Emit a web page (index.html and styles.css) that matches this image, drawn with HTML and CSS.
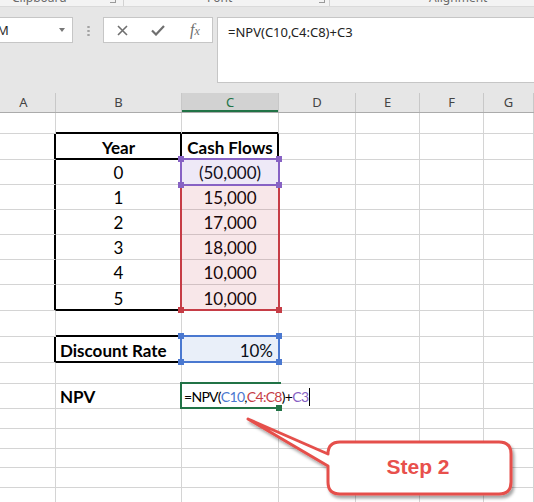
FILE: index.html
```html
<!DOCTYPE html>
<html lang="en">
<head>
    <meta charset="UTF-8">
    <title>NPV - Step 2</title>
    <link rel="stylesheet" href="styles.css">
</head>
<body>
    <!-- bottom edge of the ribbon, labels cut off -->
    <div class="ribbon-tail">
        <span class="lbl clip">Clipboard</span>
        <span class="launch"></span>
        <span class="vsep s1"></span>
        <span class="lbl font">Font</span>
        <span class="launch"></span>
        <span class="vsep s2"></span>
        <span class="lbl align">Alignment</span>
    </div>

    <!-- formula bar -->
    <div class="fbar">
        <div class="namebox">
            <span class="nm">M</span>
            <span class="drop"></span>
        </div>
        <div class="grip"></div>
        <div class="fbtns">
            <span class="btn">
                <svg width="11" height="11" viewBox="0 0 11 11"><path d="M1 1 L10 10 M10 1 L1 10" stroke="#6f6f6f" stroke-width="1.6" fill="none"/></svg>
            </span>
            <span class="btn">
                <svg width="14" height="11" viewBox="0 0 14 11"><path d="M1 5.5 L5 9.5 L13 1" stroke="#6f6f6f" stroke-width="2.2" fill="none"/></svg>
            </span>
            <span class="btn fx">f<small>x</small></span>
        </div>
        <div class="finput">=NPV(C10,C4:C8)+C3</div>
    </div>

    <!-- column headers -->
    <div class="cols">
        <div class="ca">A</div>
        <div>B</div>
        <div class="cur">C</div>
        <div>D</div>
        <div>E</div>
        <div>F</div>
        <div>G</div>
    </div>

    <div class="sheet">
        <div class="row h21"><div></div><div class="kb"></div><div class="kb"></div><div></div><div></div><div></div><div></div></div>
        <div class="row h26"><div class="kr"></div><div class="kr kb b">Year</div><div class="kr kb b">Cash Flows</div><div></div><div></div><div></div><div></div></div>
        <div class="row h25"><div class="kr"></div><div>0</div><div>(50,000)</div><div></div><div></div><div></div><div></div></div>
        <div class="row h25"><div class="kr"></div><div>1</div><div>15,000</div><div></div><div></div><div></div><div></div></div>
        <div class="row h25"><div class="kr"></div><div>2</div><div>17,000</div><div></div><div></div><div></div><div></div></div>
        <div class="row h25"><div class="kr"></div><div>3</div><div>18,000</div><div></div><div></div><div></div><div></div></div>
        <div class="row h25"><div class="kr"></div><div>4</div><div>10,000</div><div></div><div></div><div></div><div></div></div>
        <div class="row h26"><div class="kr"></div><div class="kb">5</div><div>10,000</div><div></div><div></div><div></div><div></div></div>
        <div class="row h26"><div></div><div class="kb"></div><div></div><div></div><div></div><div></div><div></div></div>
        <div class="row h26"><div class="kr"></div><div class="kr kb b left">Discount Rate</div><div class="right">10%</div><div></div><div></div><div></div><div></div></div>
        <div class="row h21"><div></div><div></div><div></div><div></div><div></div><div></div><div></div></div>
        <div class="row h25"><div></div><div class="b left">NPV</div><div></div><div></div><div></div><div></div><div></div></div>
        <div class="row h20"><div></div><div></div><div></div><div></div><div></div><div></div><div></div></div>
        <div class="row h20"><div></div><div></div><div></div><div></div><div></div><div></div><div></div></div>
        <div class="row h19"><div></div><div></div><div></div><div></div><div></div><div></div><div></div></div>
        <div class="row h20"><div></div><div></div><div></div><div></div><div></div><div></div><div></div></div>
        <div class="row h20"><div></div><div></div><div></div><div></div><div></div><div></div><div></div></div>

        <!-- reference highlights while editing -->
        <div class="rng red r-flows"><i class="bl"></i><i class="br"></i></div>
        <div class="rng purple r-first"><i class="tl"></i><i class="tr"></i><i class="bl"></i><i class="br"></i></div>
        <div class="rng blue r-rate"><i class="tl"></i><i class="tr"></i><i class="bl"></i><i class="br"></i></div>

        <!-- in-cell editor -->
        <div class="editor">=NPV(<span class="t-blue">C10</span>,<span class="t-red">C4:C8</span>)+<span class="t-purple">C3</span><span class="caret"></span></div>
        <div class="active"><i></i></div>

        <svg class="callout" width="534" height="395" viewBox="0 0 534 395">
            <defs>
                <filter id="sh" x="-10%" y="-10%" width="130%" height="140%">
                    <feDropShadow dx="2" dy="3" stdDeviation="1.5" flood-color="#000" flood-opacity="0.35"/>
                </filter>
            </defs>
            <path d="M328 341 L248 306 L328 353 L328 369 Q328 381 340 381 L499 381 Q511 381 511 369 L511 341 Q511 329 499 329 L340 329 Q328 329 328 341 Z"
                  fill="#fff" stroke="#e5504c" stroke-width="3" stroke-linejoin="round" filter="url(#sh)"/>
            <text x="418" y="361" text-anchor="middle" class="step">Step 2</text>
        </svg>
    </div>
</body>
</html>
```

FILE: styles.css
```css
* {
    margin: 0;
    padding: 0;
    box-sizing: border-box;
}

body {
    width: 534px;
    height: 502px;
    overflow: hidden;
    background: #fff;
    font-family: Lato, "Noto Sans", sans-serif;
    color: #000;
}

/* ribbon bottom strip */
.ribbon-tail {
    display: flex;
    height: 7px;
    background: #f3f3f3;
    border-bottom: 1px solid #dadada;
    overflow: hidden;
    font: 12px "Noto Sans", sans-serif;
    line-height: 14px;
    color: #6a6a6a;
}

.ribbon-tail .lbl {
    margin-top: -9px;
    white-space: nowrap;
}

.ribbon-tail .clip {
    margin-left: 12px;
    width: 98px;
}

.ribbon-tail .font {
    margin-left: 83px;
    width: 112px;
}

.ribbon-tail .align {
    margin-left: 99px;
}

.launch {
    width: 6px;
    height: 3px;
    border-right: 1px solid #9a9a9a;
    border-bottom: 1px solid #9a9a9a;
}

.vsep {
    width: 1px;
    height: 6px;
    background: #d2d2d2;
}

.vsep.s1 {
    margin-left: 7px;
}

.vsep.s2 {
    margin-left: 4px;
}

/* formula bar */
.fbar {
    display: flex;
    align-items: flex-start;
    height: 86px;
    padding-top: 10px;
    background: #e6e6e6;
}

.namebox {
    display: flex;
    align-items: center;
    justify-content: space-between;
    width: 74px;
    height: 26px;
    margin-left: -1px;
    padding-right: 7px;
    background: #fff;
    border: 1px solid #c6c6c6;
    font: 13px "Noto Sans", sans-serif;
    color: #2b2b2b;
}

.namebox .nm {
    margin-left: -3px;
}

.namebox .drop {
    width: 0;
    height: 0;
    border-left: 3px solid transparent;
    border-right: 3px solid transparent;
    border-top: 4px solid #777;
}

.grip {
    width: 3px;
    height: 12px;
    margin: 8px 0 0 14px;
    background-image: radial-gradient(circle, #a3a3a3 1px, transparent 1.4px);
    background-size: 3px 4px;
}

.fbtns {
    display: flex;
    width: 110px;
    height: 26px;
    margin-left: 13px;
    background: #fff;
    border: 1px solid #c6c6c6;
}

.fbtns .btn {
    display: flex;
    align-items: center;
    justify-content: center;
    width: 36px;
}

.fbtns .fx {
    font: italic 16px "Liberation Serif", serif;
    color: #6f6f6f;
    padding-left: 2px;
}

.fbtns .fx small {
    font-size: 12px;
    margin-top: 3px;
}

.finput {
    flex: 1;
    height: 66px;
    margin-left: 4px;
    margin-right: -4px;
    padding: 5px 10px;
    background: #fff;
    border: 1px solid #c6c6c6;
    font: 13px "Noto Sans", sans-serif;
    color: #222;
}

/* column headers */
.cols,
.row {
    display: grid;
    grid-template-columns: 56px 126px 97px 77px 64px 64px 1fr;
}

.cols {
    height: 20px;
    background: #e6e6e6;
    border-bottom: 1px solid #ababab;
    font: 13px "Noto Sans", sans-serif;
    line-height: 19px;
    color: #444;
    text-align: center;
}

.cols div {
    border-right: 1px solid #c8c8c8;
}

.cols .ca {
    padding-right: 8px;
}

.cols .cur {
    background: #d2d2d2;
    color: #217346;
    box-shadow: inset 0 -2px #217346;
}

/* sheet */
.sheet {
    position: relative;
}

.h19 { height: 19px; }
.h20 { height: 20px; }
.h21 { height: 21px; }
.h25 { height: 25px; }
.h26 { height: 26px; }

.row div {
    display: flex;
    align-items: flex-end;
    justify-content: center;
    padding-bottom: 1px;
    border-right: 1px solid #d4d4d4;
    border-bottom: 1px solid #d4d4d4;
    font-size: 17px;
    line-height: 20px;
    white-space: nowrap;
}

.row .b {
    font-weight: 700;
}

.row .left {
    justify-content: flex-start;
    padding-left: 4px;
}

.row .right {
    justify-content: flex-end;
    padding-right: 5px;
}

/* thick black cell borders */
.row .kr {
    border-right-color: #000;
    box-shadow: inset -1px 0 #000;
}

.row .kb {
    border-bottom-color: #000;
    box-shadow: inset 0 -1px #000;
}

.row .kr.kb {
    box-shadow: inset -1px -1px #000;
}

/* range highlights */
.rng {
    position: absolute;
    left: 180px;
    width: 100px;
    border: 2px solid;
}

.rng i {
    position: absolute;
    width: 6px;
    height: 6px;
}

.rng .tl { left: -4px; top: -4px; }
.rng .tr { right: -4px; top: -4px; }
.rng .bl { left: -4px; bottom: -4px; }
.rng .br { right: -4px; bottom: -4px; }

.purple {
    top: 45px;
    height: 28px;
    border-color: #8762c4;
    background: rgba(135, 98, 196, 0.14);
}

.purple i { background: #8762c4; }

.red {
    top: 71px;
    height: 127px;
    border-color: #c63d46;
    background: rgba(198, 61, 70, 0.12);
}

.red i { background: #c63d46; }

.blue {
    top: 222px;
    height: 28px;
    border-color: #4a78d0;
    background: rgba(74, 120, 208, 0.12);
}

.blue i { background: #4a78d0; }

/* editing cell */
.editor {
    position: absolute;
    left: 182px;
    top: 271px;
    width: 132px;
    height: 23px;
    display: flex;
    align-items: flex-end;
    padding-left: 2px;
    background: #fff;
    font-size: 14px;
    letter-spacing: -0.7px;
    line-height: 20px;
    white-space: nowrap;
}

.t-blue { color: #4a78d0; }
.t-red { color: #c63d46; }
.t-purple { color: #8762c4; }

.caret {
    width: 1px;
    height: 18px;
    margin: 0 0 1px 1px;
    background: #000;
}

.active {
    position: absolute;
    left: 180px;
    top: 269px;
    width: 101px;
    height: 27px;
    border: 2px solid #217346;
    border-right: 0;
}

.active i {
    position: absolute;
    left: 94px;
    top: 21px;
    width: 6px;
    height: 6px;
    background: #217346;
}

.callout {
    position: absolute;
    left: 0;
    top: 0;
}

.callout .step {
    font: bold 21px "Liberation Sans", Arial, sans-serif;
    fill: #e8504c;
}
```
